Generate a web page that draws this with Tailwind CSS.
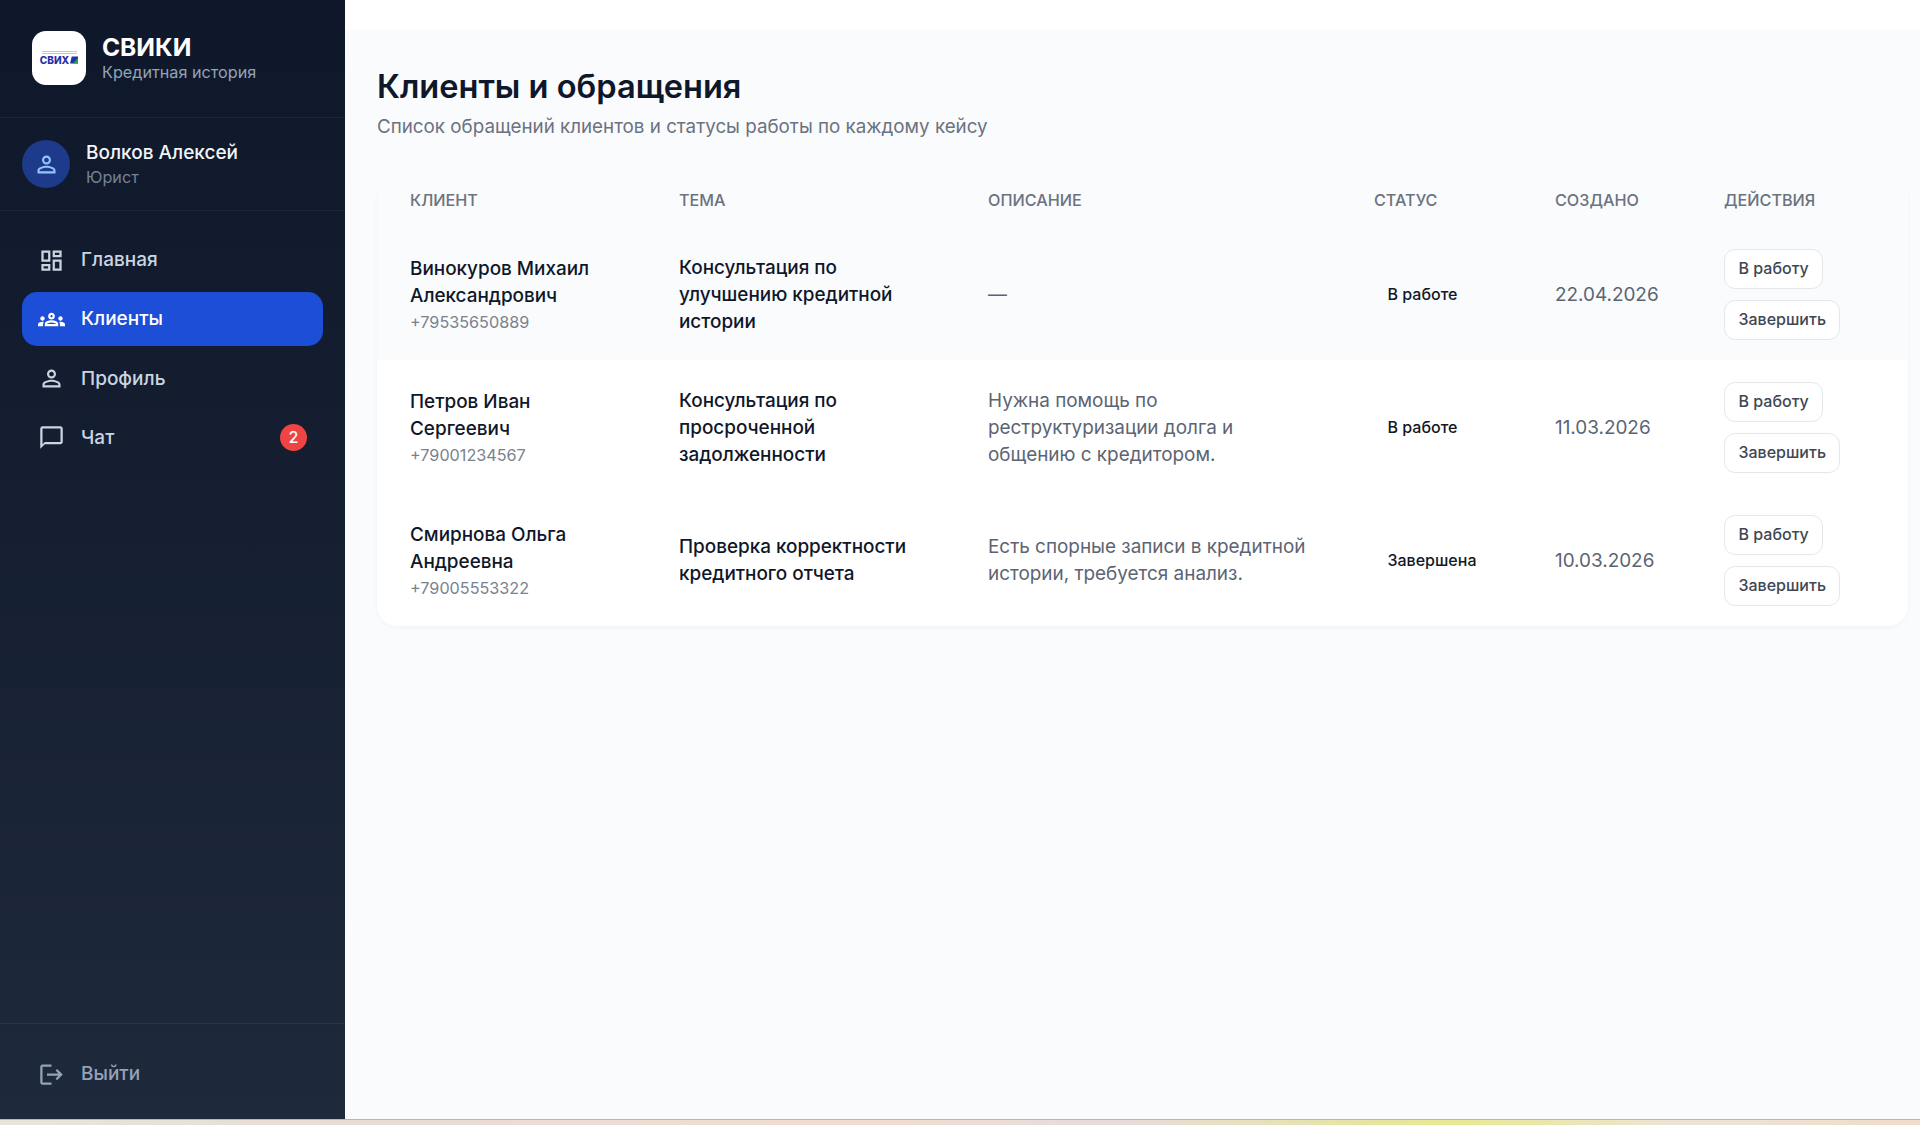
<!DOCTYPE html>
<html lang="ru">
<head>
    <meta charset="UTF-8">
    <title>Клиенты и обращения</title>
    <script src="https://cdn.jsdelivr.net/npm/@tailwindcss/browser@4"></script>
</head>
<body class="h-screen overflow-hidden bg-white font-['Inter',sans-serif]">
<div class="flex h-[1125px] flex-col">
    <div class="flex min-h-0 flex-1">
        <!-- sidebar -->
        <aside class="flex w-[345px] shrink-0 flex-col bg-gradient-to-b from-[#0f172a] to-[#1e293b]">
            <div class="flex h-[118px] items-center gap-[16px] border-b border-white/5 pl-8 pb-[1px]">
                <div class="flex h-[54px] w-[54px] flex-col items-center justify-center rounded-[14px] bg-white">
                    <div class="mb-[1px] h-[3px] w-[35px] border-y border-[#c4c6d6]"></div>
                    <div class="flex items-center gap-[1px]">
                        <span class="text-[10px] leading-[10px] font-extrabold text-[#2a2fa8]">СВИХ</span>
                        <svg class="h-[8px] w-[8px]" viewBox="0 0 9 8"><path d="M2 0h7v8H0z" fill="#2a2fa8"/><path d="M3 8l6-6v6z" fill="#22a35a"/></svg>
                    </div>
                </div>
                <div class="-mt-[2px]">
                    <div class="text-[24.5px] leading-[30px] font-bold text-white">СВИКИ</div>
                    <div class="-mt-[1px] text-[16.2px] leading-[22px] text-[#94a3b8]">Кредитная история</div>
                </div>
            </div>
            <div class="flex h-[93px] items-center gap-[16px] border-b border-white/5 pl-[22px]">
                <div class="flex h-12 w-12 items-center justify-center rounded-full bg-[#1e3a8a]">
                    <svg class="h-[27px] w-[27px] text-[#93c5fd]" viewBox="0 0 24 24" fill="currentColor"><path d="M12 5.9c1.16 0 2.1.94 2.1 2.1s-.94 2.1-2.1 2.1S9.9 9.16 9.9 8s.94-2.1 2.1-2.1m0 9c2.97 0 6.1 1.46 6.1 2.1v1.1H5.9V17c0-.64 3.13-2.1 6.1-2.1M12 4C9.79 4 8 5.79 8 8s1.79 4 4 4 4-1.79 4-4-1.79-4-4-4zm0 9c-2.67 0-8 1.34-8 4v3h16v-3c0-2.66-5.33-4-8-4z"/></svg>
                </div>
                <div class="-mt-[1px]">
                    <div class="pt-[1px] text-[19px] leading-[26px] font-medium text-[#f1f5f9]">Волков Алексей</div>
                    <div class="text-[16.2px] leading-[22px] text-[#748297]">Юрист</div>
                </div>
            </div>
            <nav class="flex flex-1 flex-col gap-[5px] px-[22px] pt-[22px]">
                <a class="flex h-[54px] items-center gap-[16px] rounded-[15px] pl-4 text-[19px] font-medium text-[#cbd5e1]">
                    <svg class="h-[27px] w-[27px]" viewBox="0 0 24 24" fill="currentColor"><path d="M19 5v2h-4V5h4M9 5v6H5V5h4m10 8v6h-4v-6h4M9 17v2H5v-2h4M21 3h-8v6h8V3zM11 3H3v10h8V3zm10 8h-8v10h8V11zm-10 4H3v6h8v-6z"/></svg>
                    Главная
                </a>
                <a class="flex h-[54px] items-center gap-[16px] rounded-[15px] bg-[#1d4ed8] pl-4 text-[19px] font-medium text-white">
                    <svg class="h-[27px] w-[27px]" viewBox="0 0 24 24" fill="currentColor"><path d="M4 13c1.1 0 2-.9 2-2 0-1.1-.9-2-2-2s-2 .9-2 2c0 1.1.9 2 2 2zm1.13 1.1C4.76 14.04 4.39 14 4 14c-.99 0-1.93.21-2.78.58C.48 14.9 0 15.62 0 16.43V18h4.5v-1.61c0-.83.23-1.61.63-2.29zM20 13c1.1 0 2-.9 2-2 0-1.1-.9-2-2-2s-2 .9-2 2c0 1.1.9 2 2 2zm4 3.43c0-.81-.48-1.53-1.22-1.85C21.93 14.21 20.99 14 20 14c-.39 0-.76.04-1.13.1.4.68.63 1.46.63 2.29V18H24v-1.57zm-7.76-2.78c-1.17-.52-2.61-.9-4.24-.9s-3.07.39-4.24.9C6.68 14.13 6 15.21 6 16.39V18h12v-1.61c0-1.18-.68-2.26-1.76-2.74zM8.07 16c.09-.23.13-.39.91-.69.97-.38 1.99-.56 3.02-.56s2.05.18 3.02.56c.77.3.81.46.91.69H8.07zM12 8c.55 0 1 .45 1 1s-.45 1-1 1-1-.45-1-1 .45-1 1-1m0-2c-1.66 0-3 1.34-3 3s1.34 3 3 3 3-1.34 3-3-1.34-3-3-3z"/></svg>
                    Клиенты
                </a>
                <a class="flex h-[54px] items-center gap-[16px] rounded-[15px] pl-4 text-[19px] font-medium text-[#cbd5e1]">
                    <svg class="h-[27px] w-[27px]" viewBox="0 0 24 24" fill="currentColor"><path d="M12 5.9c1.16 0 2.1.94 2.1 2.1s-.94 2.1-2.1 2.1S9.9 9.16 9.9 8s.94-2.1 2.1-2.1m0 9c2.97 0 6.1 1.46 6.1 2.1v1.1H5.9V17c0-.64 3.13-2.1 6.1-2.1M12 4C9.79 4 8 5.79 8 8s1.79 4 4 4 4-1.79 4-4-1.79-4-4-4zm0 9c-2.67 0-8 1.34-8 4v3h16v-3c0-2.66-5.33-4-8-4z"/></svg>
                    <span class="pt-[2px]">Профиль</span>
                </a>
                <a class="flex h-[54px] items-center gap-[16px] rounded-[15px] pr-4 pl-4 text-[19px] font-medium text-[#cbd5e1]">
                    <svg class="h-[27px] w-[27px]" viewBox="0 0 24 24" fill="currentColor"><path d="M20 2H4c-1.1 0-2 .9-2 2v18l4-4h14c1.1 0 2-.9 2-2V4c0-1.1-.9-2-2-2zm0 14H6l-2 2V4h16v12z"/></svg>
                    <span class="pt-[2px]">Чат</span>
                    <span class="ml-auto flex h-[27px] w-[27px] items-center justify-center rounded-full bg-[#ef4444] text-[16px] font-medium text-white">2</span>
                </a>
            </nav>
            <div class="h-[96px] border-t border-white/5 px-[22px] pt-[23px]">
                <a class="flex h-[54px] items-center gap-[16px] pl-4 text-[19px] font-medium text-[#94a3b8]">
                    <svg class="h-[27px] w-[27px]" viewBox="0 0 24 24" fill="currentColor"><path d="M17 7l-1.41 1.41L18.17 11H8v2h10.17l-2.58 2.58L17 17l5-5zM4 5h8V3H4c-1.1 0-2 .9-2 2v14c0 1.1.9 2 2 2h8v-2H4V5z"/></svg>
                    Выйти
                </a>
            </div>
        </aside>

        <!-- main -->
        <div class="flex min-w-0 flex-1 flex-col">
            <div class="h-[30px] bg-white"></div>
            <main class="flex-1 bg-[#f9fbfd] pt-[36px] pr-3 pl-8">
                <h1 class="text-[32.6px] leading-[40px] font-semibold text-[#0f172a]">Клиенты и обращения</h1>
                <p class="mt-[8px] text-[18.8px] leading-[26px] text-[#6b7280]">Список обращений клиентов и статусы работы по каждому кейсу</p>

                <div class="mt-[33px] overflow-hidden rounded-[20px] bg-white shadow-[0_2px_4px_rgba(15,23,42,0.03)]">
                    <table class="w-full table-fixed border-collapse text-left">
                        <colgroup>
                            <col class="w-[270px]"><col class="w-[309px]"><col class="w-[386px]"><col class="w-[181px]"><col class="w-[169px]"><col>
                        </colgroup>
                        <thead>
                            <tr class="h-[54px] bg-[#f9fbfd] text-[16.2px] font-medium text-[#6b7280] uppercase">
                                <th class="pl-[33px] font-medium">Клиент</th>
                                <th class="pl-8 font-medium">Тема</th>
                                <th class="pl-8 font-medium">Описание</th>
                                <th class="pl-8 font-medium">Статус</th>
                                <th class="pl-8 font-medium">Создано</th>
                                <th class="pl-8 font-medium">Действия</th>
                            </tr>
                        </thead>
                        <tbody class="text-[18.9px] leading-[27px]">
                            <tr class="h-[133px] bg-[#f9fbfd]">
                                <td class="pt-[4px] pr-8 pl-[33px]">
                                    <div class="font-medium text-[#0f172a]">Винокуров Михаил Александрович</div>
                                    <div class="text-[16.2px] text-[#7a828e]">+79535650889</div>
                                </td>
                                <td class="pt-[2px] pr-8 pl-8 font-medium text-[#0f172a]">Консультация по улучшению кредитной истории</td>
                                <td class="pt-[2px] pl-8 text-[#5b6472]">—</td>
                                <td class="pl-8"><span class="px-[13.5px] text-[16px] font-medium text-[#111827]">В работе</span></td>
                                <td class="pt-[1px] pl-8 text-[#5b6472]">22.04.2026</td>
                                <td class="pt-[1px] pl-8">
                                    <div class="flex flex-col items-start gap-[11px]">
                                        <button class="h-10 rounded-[11px] border border-[#e5e7eb] bg-white px-[13.5px] text-[16px] font-medium text-[#3f4754]">В работу</button>
                                        <button class="h-10 rounded-[11px] border border-[#e5e7eb] bg-white px-[13.5px] text-[16px] font-medium text-[#3f4754]">Завершить</button>
                                    </div>
                                </td>
                            </tr>
                            <tr class="h-[133px]">
                                <td class="pt-[4px] pr-8 pl-[33px]">
                                    <div class="font-medium text-[#0f172a]">Петров Иван Сергеевич</div>
                                    <div class="text-[16.2px] text-[#7a828e]">+79001234567</div>
                                </td>
                                <td class="pt-[2px] pr-8 pl-8 font-medium text-[#0f172a]">Консультация по просроченной задолженности</td>
                                <td class="pt-[2px] pl-8 text-[#5b6472]"><div class="max-w-[325px]">Нужна помощь по реструктуризации долга и общению с кредитором.</div></td>
                                <td class="pl-8"><span class="px-[13.5px] text-[16px] font-medium text-[#111827]">В работе</span></td>
                                <td class="pt-[1px] pl-8 text-[#5b6472]">11.03.2026</td>
                                <td class="pt-[1px] pl-8">
                                    <div class="flex flex-col items-start gap-[11px]">
                                        <button class="h-10 rounded-[11px] border border-[#e5e7eb] bg-white px-[13.5px] text-[16px] font-medium text-[#3f4754]">В работу</button>
                                        <button class="h-10 rounded-[11px] border border-[#e5e7eb] bg-white px-[13.5px] text-[16px] font-medium text-[#3f4754]">Завершить</button>
                                    </div>
                                </td>
                            </tr>
                            <tr class="h-[133px]">
                                <td class="pt-[4px] pr-8 pl-[33px]">
                                    <div class="font-medium text-[#0f172a]">Смирнова Ольга Андреевна</div>
                                    <div class="text-[16.2px] text-[#7a828e]">+79005553322</div>
                                </td>
                                <td class="pt-[1px] pr-8 pl-8 font-medium text-[#0f172a]">Проверка корректности кредитного отчета</td>
                                <td class="pt-[1px] pl-8 text-[#5b6472]"><div class="max-w-[325px]">Есть спорные записи в кредитной истории, требуется анализ.</div></td>
                                <td class="pl-8"><span class="px-[13.5px] text-[16px] font-medium text-[#111827]">Завершена</span></td>
                                <td class="pt-[1px] pl-8 text-[#5b6472]">10.03.2026</td>
                                <td class="pt-[1px] pl-8">
                                    <div class="flex flex-col items-start gap-[11px]">
                                        <button class="h-10 rounded-[11px] border border-[#e5e7eb] bg-white px-[13.5px] text-[16px] font-medium text-[#3f4754]">В работу</button>
                                        <button class="h-10 rounded-[11px] border border-[#e5e7eb] bg-white px-[13.5px] text-[16px] font-medium text-[#3f4754]">Завершить</button>
                                    </div>
                                </td>
                            </tr>
                        </tbody>
                    </table>
                </div>
            </main>
        </div>
    </div>
    <!-- полоска снизу -->
    <div class="h-[6px] shrink-0 border-t border-[#b8b8b0] bg-[linear-gradient(90deg,#e6e6d8,#e8dcd6_20%,#f2dcd0_45%,#e6dcdc_58%,#e4e6a0_72%,#e6ea90_75%,#ece4d8_88%,#f0dcc8)]"></div>
</div>
</body>
</html>
